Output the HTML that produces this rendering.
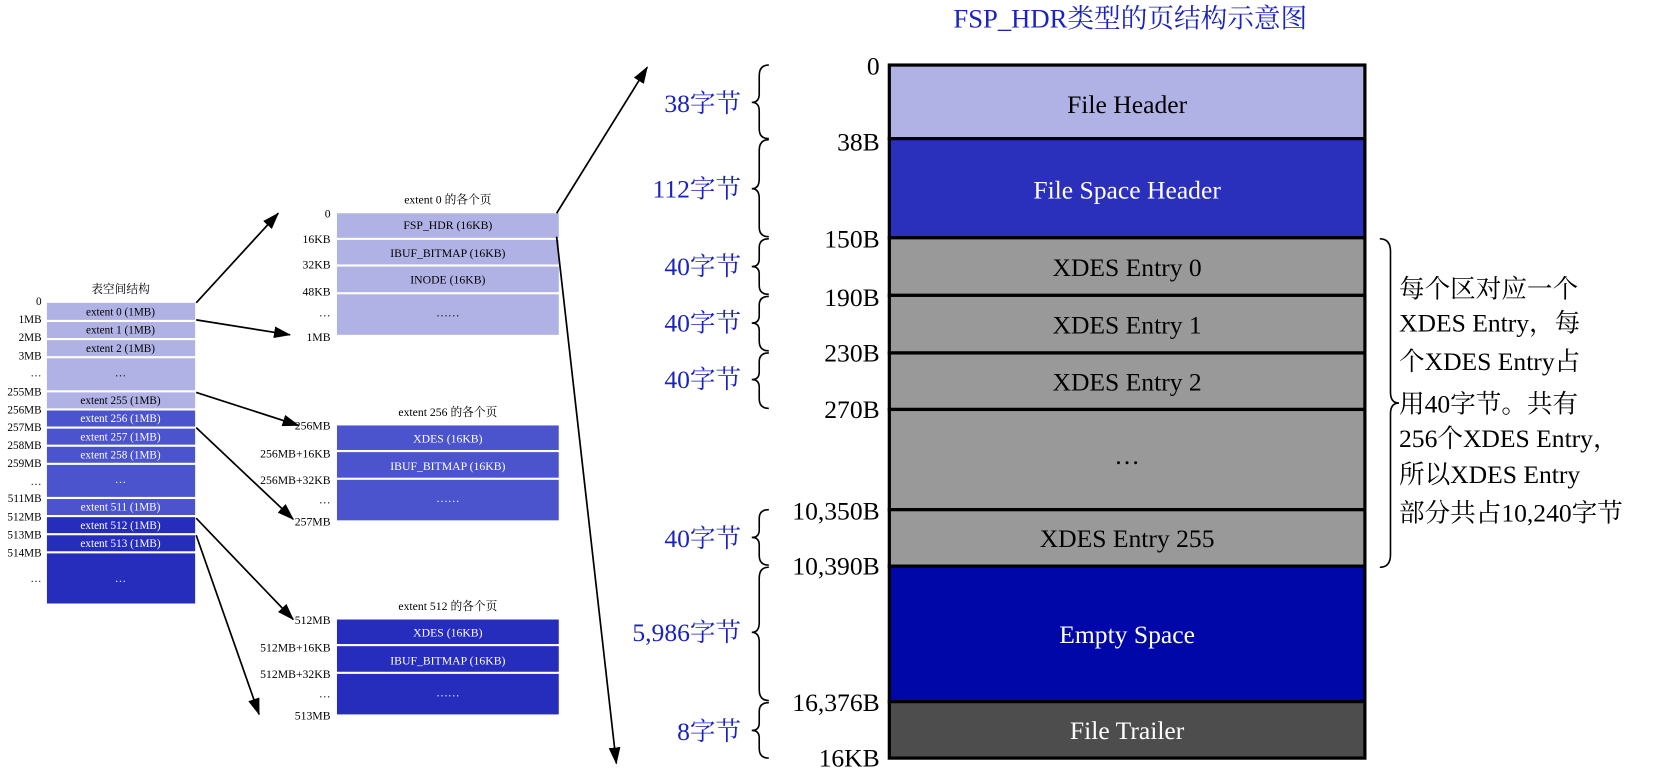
<!DOCTYPE html>
<html><head><meta charset="utf-8"><style>
html,body{margin:0;padding:0;background:#fff;width:1672px;height:777px;overflow:hidden}
svg{display:block}
text{font-family:"Liberation Serif","Noto Serif CJK SC",serif}
</style></head><body>
<svg width="1672" height="777" viewBox="0 0 1568 728.7" preserveAspectRatio="none" xmlns="http://www.w3.org/2000/svg">
<defs>
<marker id="ah2" markerWidth="16" markerHeight="11" refX="15" refY="5.5" orient="auto" markerUnits="userSpaceOnUse"><path d="M0,0 L16,5.5 L0,11 z" fill="#000"/></marker>
</defs>
<text x="1060" y="26" font-size="25" fill="#1a22c0" text-anchor="middle">FSP_HDR类型的页结构示意图</text>

<text x="113" y="275" font-size="11" text-anchor="middle">表空间结构</text>
<g font-size="10.5" text-anchor="middle">
<rect x="44" y="284" width="139" height="16" fill="#b0b2e6"/><text x="113" y="296">extent 0 (1MB)</text>
<rect x="44" y="302" width="139" height="15" fill="#b0b2e6"/><text x="113" y="313">extent 1 (1MB)</text>
<rect x="44" y="319" width="139" height="15" fill="#b0b2e6"/><text x="113" y="330">extent 2 (1MB)</text>
<rect x="44" y="336" width="139" height="30" fill="#b0b2e6"/><text x="113" y="353">…</text>
<rect x="44" y="368" width="139" height="15" fill="#b0b2e6"/><text x="113" y="379">extent 255 (1MB)</text>
<g fill="#fff">
<rect x="44" y="385" width="139" height="15" fill="#4b54cc"/><text x="113" y="396">extent 256 (1MB)</text>
<rect x="44" y="402" width="139" height="15" fill="#4b54cc"/><text x="113" y="413">extent 257 (1MB)</text>
<rect x="44" y="419" width="139" height="15" fill="#4b54cc"/><text x="113" y="430">extent 258 (1MB)</text>
<rect x="44" y="436" width="139" height="30" fill="#4b54cc"/><text x="113" y="453">…</text>
<rect x="44" y="468" width="139" height="15" fill="#4b54cc"/><text x="113" y="479">extent 511 (1MB)</text>
<rect x="44" y="485" width="139" height="15" fill="#262cbc"/><text x="113" y="496">extent 512 (1MB)</text>
<rect x="44" y="502" width="139" height="15" fill="#262cbc"/><text x="113" y="513">extent 513 (1MB)</text>
<rect x="44" y="519" width="139" height="47" fill="#262cbc"/><text x="113" y="546">…</text>
</g>
</g>
<g font-size="10.5" text-anchor="end">
<text x="39" y="286">0</text><text x="39" y="303">1MB</text><text x="39" y="320">2MB</text><text x="39" y="337">3MB</text><text x="39" y="353">…</text>
<text x="39" y="371">255MB</text><text x="39" y="388">256MB</text><text x="39" y="404">257MB</text><text x="39" y="421">258MB</text><text x="39" y="438">259MB</text><text x="39" y="455">…</text>
<text x="39" y="471">511MB</text><text x="39" y="488">512MB</text><text x="39" y="505">513MB</text><text x="39" y="522">514MB</text><text x="39" y="546">…</text>
</g>

<g font-size="11" text-anchor="middle">
<text x="420" y="191">extent 0 的各个页</text>
<rect x="316" y="200" width="208" height="23" fill="#b0b2e6"/><text x="420" y="215">FSP_HDR (16KB)</text>
<rect x="316" y="225" width="208" height="23" fill="#b0b2e6"/><text x="420" y="241">IBUF_BITMAP (16KB)</text>
<rect x="316" y="250" width="208" height="24" fill="#b0b2e6"/><text x="420" y="266">INODE (16KB)</text>
<rect x="316" y="276" width="208" height="38" fill="#b0b2e6"/><text x="420" y="297">……</text>

<text x="420" y="390">extent 256 的各个页</text>
<g fill="#fff">
<rect x="316" y="399" width="208" height="23" fill="#4b54cc"/><text x="420" y="415">XDES (16KB)</text>
<rect x="316" y="424" width="208" height="24" fill="#4b54cc"/><text x="420" y="441">IBUF_BITMAP (16KB)</text>
<rect x="316" y="450" width="208" height="38" fill="#4b54cc"/><text x="420" y="471">……</text>
</g>
<text x="420" y="572">extent 512 的各个页</text>
<g fill="#fff">
<rect x="316" y="581" width="208" height="23" fill="#262cbc"/><text x="420" y="597">XDES (16KB)</text>
<rect x="316" y="606" width="208" height="24" fill="#262cbc"/><text x="420" y="623">IBUF_BITMAP (16KB)</text>
<rect x="316" y="632" width="208" height="38" fill="#262cbc"/><text x="420" y="653">……</text>
</g>
</g>
<g font-size="11" text-anchor="end">
<text x="310" y="204">0</text><text x="310" y="228">16KB</text><text x="310" y="252">32KB</text><text x="310" y="277">48KB</text><text x="310" y="297">…</text><text x="310" y="320">1MB</text>
<text x="310" y="403">256MB</text><text x="310" y="429">256MB+16KB</text><text x="310" y="454">256MB+32KB</text><text x="310" y="472">…</text><text x="310" y="493">257MB</text>
<text x="310" y="585">512MB</text><text x="310" y="611">512MB+16KB</text><text x="310" y="636">512MB+32KB</text><text x="310" y="654">…</text><text x="310" y="675">513MB</text>
</g>

<g stroke="#000" stroke-width="1.6" fill="none">
<line x1="184" y1="284" x2="261" y2="200" marker-end="url(#ah2)"/>
<line x1="184" y1="300" x2="272" y2="314" marker-end="url(#ah2)"/>
<line x1="184" y1="368" x2="280" y2="399" marker-end="url(#ah2)"/>
<line x1="184" y1="401" x2="275" y2="487" marker-end="url(#ah2)"/>
<line x1="184" y1="486" x2="275" y2="581" marker-end="url(#ah2)"/>
<line x1="184" y1="502" x2="243" y2="670" marker-end="url(#ah2)"/>
<line x1="522" y1="200" x2="607" y2="63" marker-end="url(#ah2)"/>
<line x1="522" y1="222" x2="578" y2="716" marker-end="url(#ah2)"/>
</g>

<g stroke="#000" stroke-width="3">
<rect x="834" y="61" width="446" height="69" fill="#b0b2e6"/>
<rect x="834" y="130" width="446" height="93" fill="#2a2fbc"/>
<rect x="834" y="223" width="446" height="54" fill="#999"/>
<rect x="834" y="277" width="446" height="54" fill="#999"/>
<rect x="834" y="331" width="446" height="53" fill="#999"/>
<rect x="834" y="384" width="446" height="94" fill="#999"/>
<rect x="834" y="478" width="446" height="53" fill="#999"/>
<rect x="834" y="531" width="446" height="127" fill="#0007a8"/>
<rect x="834" y="658" width="446" height="53" fill="#4d4d4d"/>
</g>
<g font-size="24" text-anchor="middle">
<text x="1057" y="106">File Header</text>
<text x="1057" y="186" fill="#fff">File Space Header</text>
<text x="1057" y="259">XDES Entry 0</text>
<text x="1057" y="313">XDES Entry 1</text>
<text x="1057" y="366">XDES Entry 2</text>
<text x="1057" y="435">…</text>
<text x="1057" y="513">XDES Entry 255</text>
<text x="1057" y="603" fill="#fff">Empty Space</text>
<text x="1057" y="693" fill="#fff">File Trailer</text>
</g>
<g font-size="24" text-anchor="end">
<text x="825" y="70">0</text><text x="825" y="141">38B</text><text x="825" y="232">150B</text>
<text x="825" y="287">190B</text><text x="825" y="339">230B</text><text x="825" y="392">270B</text>
<text x="825" y="487">10,350B</text><text x="825" y="539">10,390B</text><text x="825" y="667">16,376B</text><text x="825" y="719">16KB</text>
</g>
<g stroke="#000" stroke-width="1.5" fill="none">
<path d="M721,61 Q712,61 712,71 L712,88 Q712,96 705,96 Q712,96 712,104 L712,121 Q712,130 721,130"/>
<path d="M721,131 Q712,131 712,141 L712,168 Q712,177 705,177 Q712,177 712,186 L712,213 Q712,222 721,222"/>
<path d="M721,224 Q712,224 712,232 L712,243 Q712,250 705,250 Q712,250 712,257 L712,268 Q712,276 721,276"/>
<path d="M721,278 Q712,278 712,286 L712,296 Q712,303 705,303 Q712,303 712,310 L712,320 Q712,329 721,329"/>
<path d="M721,331 Q712,331 712,339 L712,349 Q712,356 705,356 Q712,356 712,363 L712,374 Q712,383 721,383"/>
<path d="M721,478 Q712,478 712,486 L712,497 Q712,504 705,504 Q712,504 712,511 L712,521 Q712,530 721,530"/>
<path d="M721,532 Q712,532 712,542 L712,584 Q712,593 705,593 Q712,593 712,602 L712,647 Q712,657 721,657"/>
<path d="M721,659 Q712,659 712,667 L712,678 Q712,685 705,685 Q712,685 712,692 L712,702 Q712,711 721,711"/>
<path d="M1294,224 Q1304,224 1304,236 L1304,368 Q1304,378 1312,378 Q1304,378 1304,388 L1304,520 Q1304,532 1294,532"/>
</g>
<g font-size="24" fill="#1a22c0" text-anchor="end">
<text x="695" y="105">38字节</text>
<text x="695" y="185">112字节</text>
<text x="695" y="258">40字节</text>
<text x="695" y="311">40字节</text>
<text x="695" y="364">40字节</text>
<text x="695" y="513">40字节</text>
<text x="695" y="601">5,986字节</text>
<text x="695" y="694">8字节</text>
</g>
<g font-size="24">
<text x="1312" y="279">每个区对应一个</text>
<text x="1312" y="311">XDES Entry，每</text>
<text x="1312" y="347">个XDES Entry占</text>
<text x="1312" y="387">用40字节。共有</text>
<text x="1312" y="419">256个XDES Entry，</text>
<text x="1312" y="453">所以XDES Entry</text>
<text x="1312" y="489">部分共占10,240字节</text>
</g>
</svg>
</body></html>
